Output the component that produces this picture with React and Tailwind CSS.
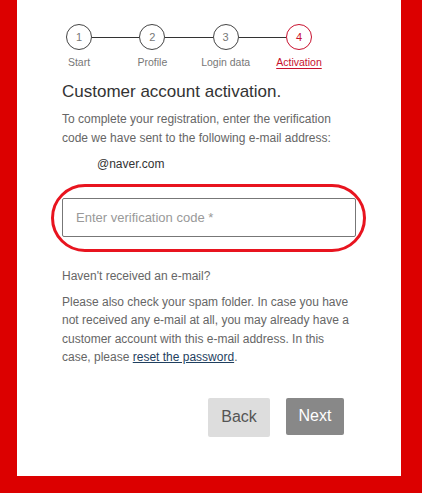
import React from "react";

const steps = ["Start", "Profile", "Login data", "Activation"];

const Stepper = () => (
  <div className="flex items-start pl-[49px] pr-[89px] pt-[24px]">
    {steps.map((label, i) => {
      const active = i === steps.length - 1;
      return (
        <React.Fragment key={label}>
          {i > 0 && <div className="mt-[12.5px] h-[1.5px] flex-1 bg-[#333]" />}
          <div className="flex w-[26px] flex-col items-center">
            <div
              className={
                active
                  ? "flex h-[26px] w-[26px] items-center justify-center rounded-full border border-[#c8102e] text-[11px] text-[#c8102e]"
                  : "flex h-[26px] w-[26px] items-center justify-center rounded-full border border-[#444] text-[11px] text-[#777]"
              }
            >
              {i + 1}
            </div>
            <span
              className={
                active
                  ? "mt-[5px] whitespace-nowrap text-[10.5px] text-[#c8102e] underline underline-offset-2"
                  : "mt-[5px] whitespace-nowrap text-[10.5px] text-[#777]"
              }
            >
              {label}
            </span>
          </div>
        </React.Fragment>
      );
    })}
  </div>
);

export default function App() {
  return (
    <div className="h-[493px] w-[422px] bg-[#dc0000] font-['Liberation_Sans',Arial,sans-serif]">
      <div className="h-[476px] w-[384px] ml-[17px] bg-white">
        <Stepper />

        <div className="px-[45px]">
          {/* Heading */}
          <h1 className="mt-[10px] text-[17px] leading-[22px] text-[#333]">
            Customer account activation.
          </h1>
          <p className="mt-[7px] text-[12px] leading-[19px] text-[#666]">
            To complete your registration, enter the verification code we have sent to the following e-mail address:
          </p>
          <p className="mt-[7px] pl-[35px] text-[12px] text-[#333]">@naver.com</p>

          {/* Code input with red annotation */}
          <div className="relative mt-[25px]">
            <input
              type="text"
              placeholder="Enter verification code *"
              className="h-[39px] w-full rounded-[2px] border border-[#777] px-[13px] text-[13px] text-[#333] placeholder:text-[#999] focus:outline-none"
            />
            <div className="pointer-events-none absolute -left-[11px] -right-[10px] -top-[14px] -bottom-[15px] rounded-[34px] border-[3px] border-[#e8141f]" />
          </div>

          <p className="mt-[30px] text-[12px] text-[#666]">Haven't received an e-mail?</p>
          <p className="mt-[8px] text-[12px] leading-[18.5px] text-[#666]">
            Please also check your spam folder. In case you have not received any e-mail at all, you may already have a customer account with this e-mail address. In this case, please{" "}
            <a href="#" className="text-[#1f3f5f] underline">reset the password</a>.
          </p>

          {/* Buttons */}
          <div className="mt-[31px] flex items-start justify-end gap-[16px] pr-[12px]">
            <button className="h-[39px] w-[62px] rounded-[2px] bg-[#dddddd] text-[16px] text-[#555]">Back</button>
            <button className="h-[37px] w-[58px] rounded-[2px] bg-[#888888] text-[16px] text-white">Next</button>
          </div>
        </div>
      </div>
    </div>
  );
}
